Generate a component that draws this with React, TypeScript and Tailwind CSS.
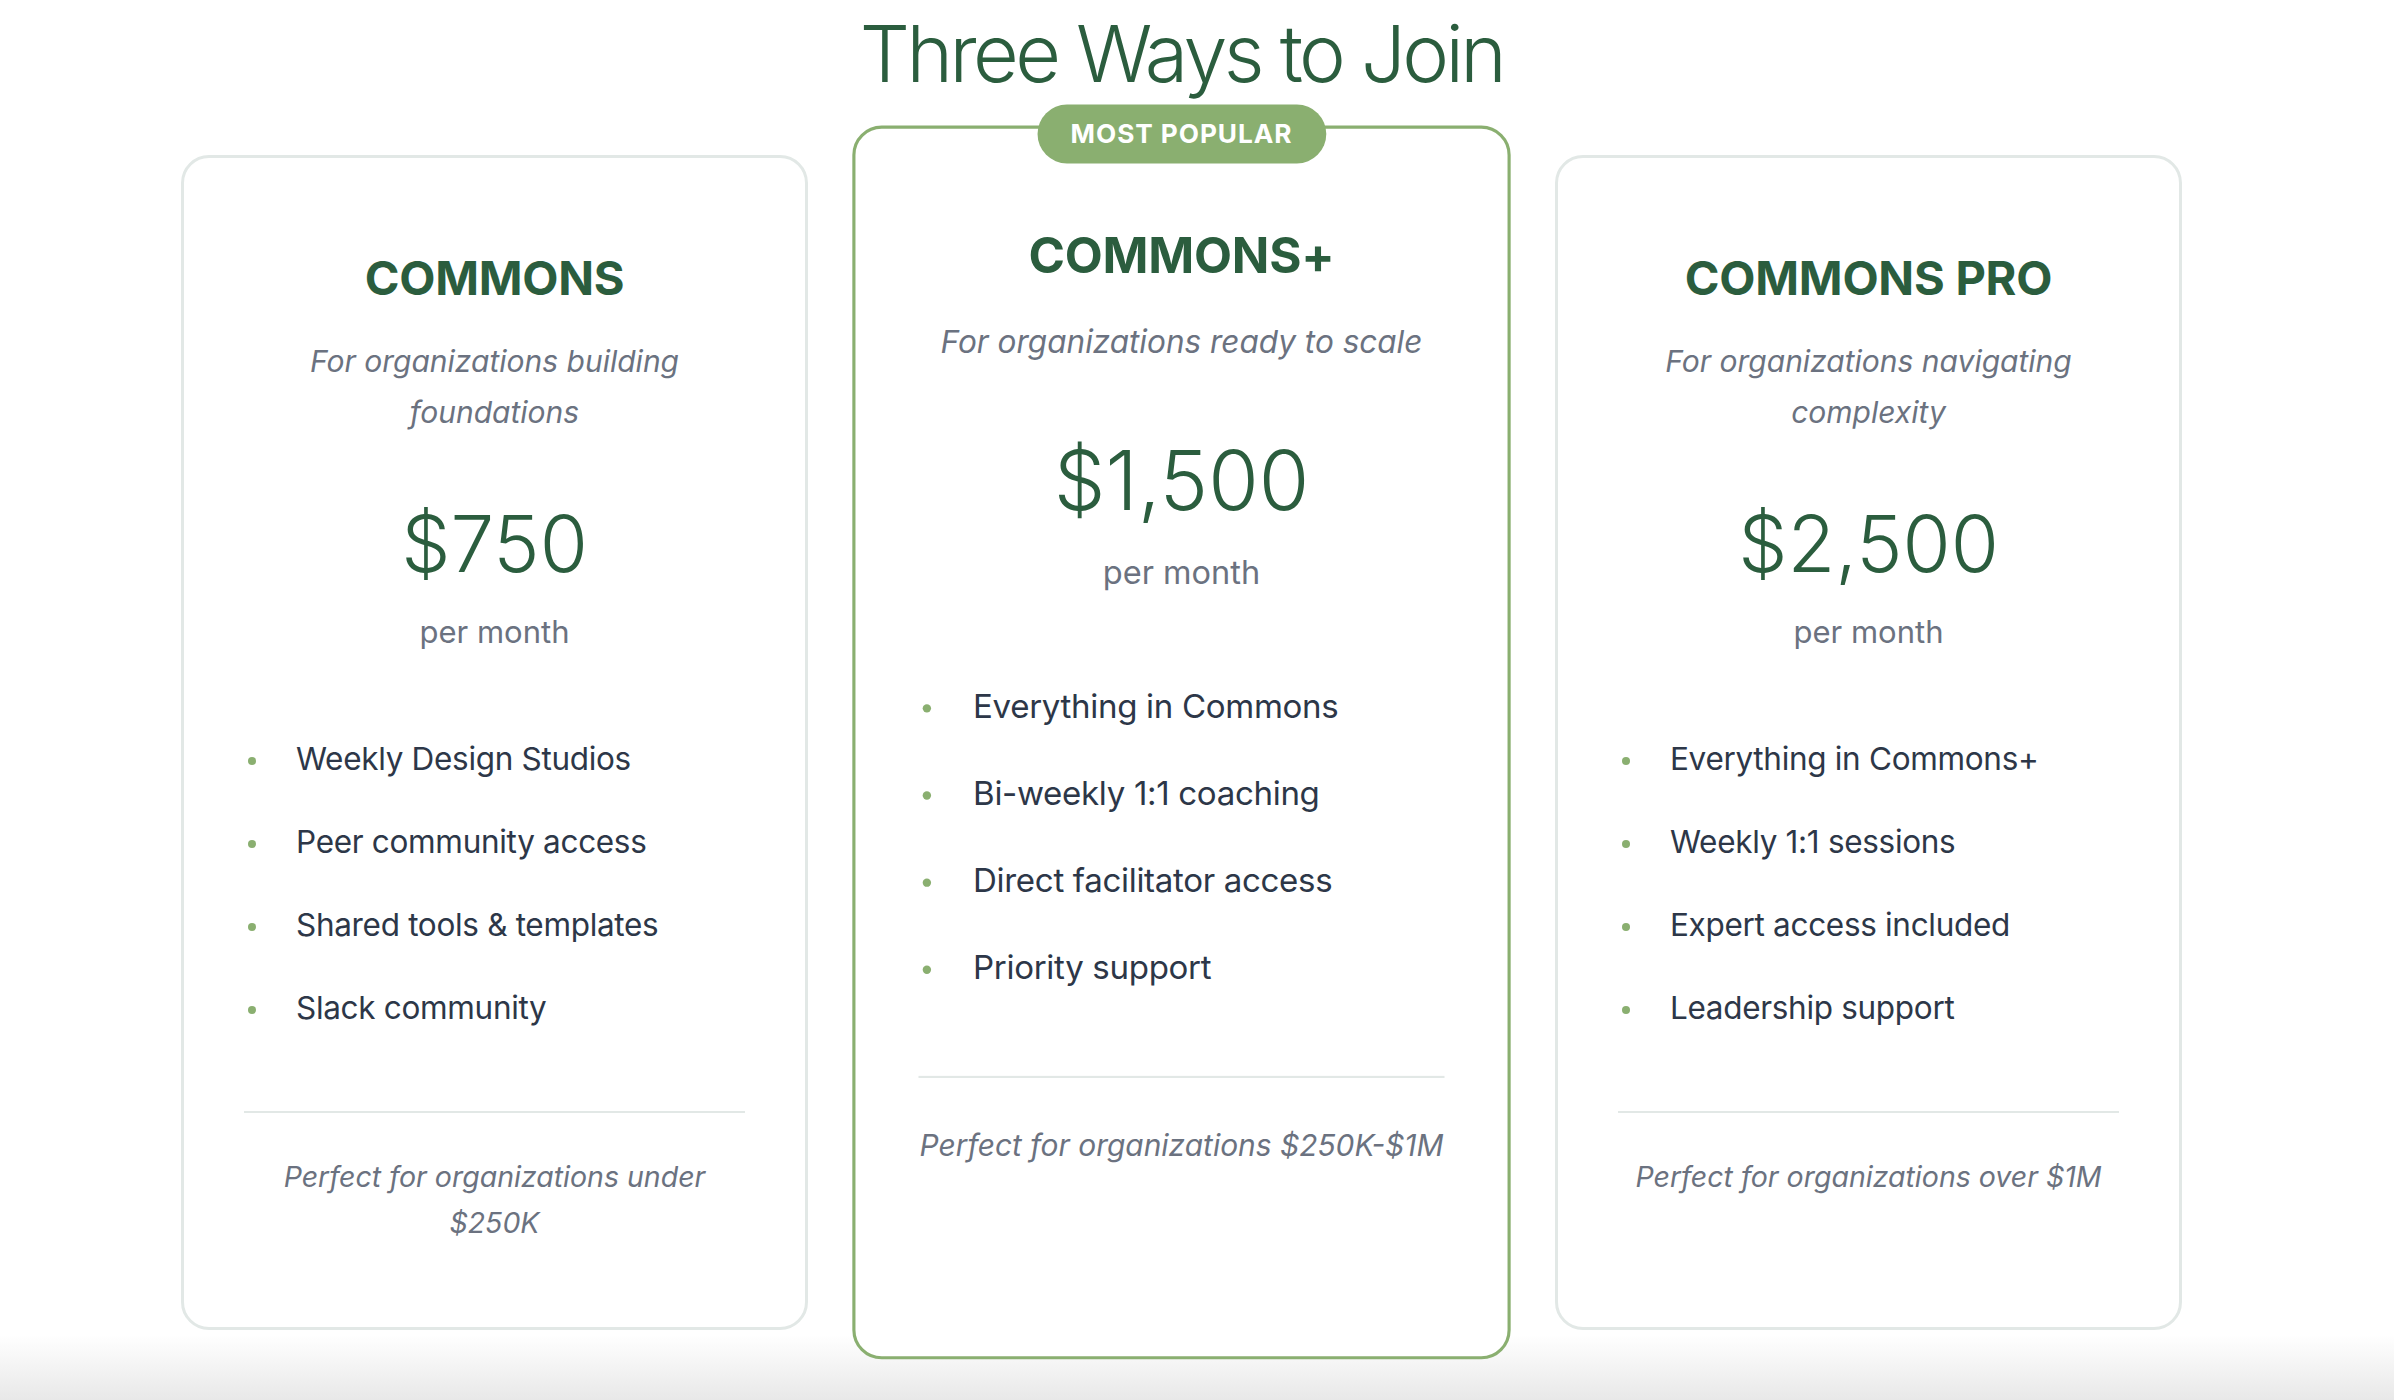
import React from "react";

type Plan = {
  name: string;
  desc: string;
  price: string;
  features: string[];
  note: string;
  popular?: boolean;
};

const plans: Plan[] = [
  {
    name: "COMMONS",
    desc: "For organizations building foundations",
    price: "$750",
    features: [
      "Weekly Design Studios",
      "Peer community access",
      "Shared tools & templates",
      "Slack community",
    ],
    note: "Perfect for organizations under $250K",
  },
  {
    name: "COMMONS+",
    desc: "For organizations ready to scale",
    price: "$1,500",
    features: [
      "Everything in Commons",
      "Bi-weekly 1:1 coaching",
      "Direct facilitator access",
      "Priority support",
    ],
    note: "Perfect for organizations $250K-$1M",
    popular: true,
  },
  {
    name: "COMMONS PRO",
    desc: "For organizations navigating complexity",
    price: "$2,500",
    features: [
      "Everything in Commons+",
      "Weekly 1:1 sessions",
      "Expert access included",
      "Leadership support",
    ],
    note: "Perfect for organizations over $1M",
  },
];

function Card({ plan }: { plan: Plan }) {
  return (
    <div
      className={
        plan.popular
          ? "relative flex flex-col items-center rounded-[28px] border-[3px] border-[#8aaf70] bg-white px-[60px] pt-[92px] pb-[82px] scale-105"
          : "relative flex flex-col items-center rounded-[28px] border-[3px] border-[#e2e8e6] bg-white px-[60px] pt-[92px] pb-[82px]"
      }
    >
      {plan.popular && (
        <div className="absolute -top-[23px] left-1/2 -translate-x-1/2 whitespace-nowrap rounded-full bg-[#8aaf70] px-[32px] py-[13px] text-[25px] leading-[30px] font-bold tracking-[0.035em] text-white">
          MOST POPULAR
        </div>
      )}
      <h3 className="text-center text-[47px] leading-[56px] font-bold tracking-[-0.005em] text-[#2b5d3e]">
        {plan.name}
      </h3>
      <p className="mt-[30px] max-w-[470px] text-center text-[30px] leading-[51px] italic text-[#6b7280]">
        {plan.desc}
      </p>
      <div className="mt-[59px] text-center text-[78px] leading-[94px] font-light text-[#2b5d3e]">
        {plan.price}
      </div>
      <div className="mt-[17px] text-center text-[31px] leading-[47px] text-[#6b7280]">
        per month
      </div>
      <ul className="mt-[79px] flex w-full flex-col gap-[33px]">
        {plan.features.map((f) => (
          <li key={f} className="flex items-center text-[31.5px] leading-[50px] tracking-[-0.01em] text-[#2d3748]">
            <span className="ml-[4px] h-[8px] w-[8px] shrink-0 translate-y-[2px] rounded-full bg-[#8aaf70]" />
            <span className="ml-[40px]">{f}</span>
          </li>
        ))}
      </ul>
      <div className="mt-[78px] w-full border-t-2 border-[#e2e8e6] pt-[41px] text-center text-[28.5px] leading-[45.6px] italic text-[#6b7280]">
        {plan.note}
      </div>
    </div>
  );
}

export default function App() {
  return (
    <div className="min-h-[1400px] bg-[linear-gradient(to_bottom,#ffffff_1335px,#e8e8e8_1400px)] font-[Inter,sans-serif]">
      <div className="pr-[31px] pt-[13px]">
        <h2 className="text-center text-[79px] leading-[80px] font-light tracking-[-0.045em] text-[#2b5d3e]">
          Three Ways to Join
        </h2>
        <div className="mx-auto mt-[62px] grid w-[2001px] grid-cols-3 gap-[60px]">
          {plans.map((p) => (
            <Card key={p.name} plan={p} />
          ))}
        </div>
      </div>
    </div>
  );
}
